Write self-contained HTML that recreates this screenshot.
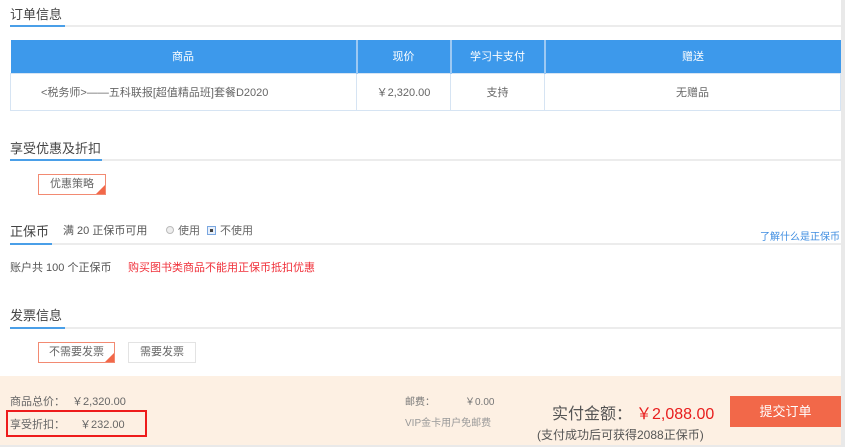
<!DOCTYPE html>
<html><head><meta charset="utf-8"><style>
*{margin:0;padding:0;box-sizing:border-box}
body{width:845px;height:447px;background:#fff;font-family:"Liberation Sans","Noto Sans CJK SC",sans-serif;color:#666;position:relative;overflow:hidden;font-size:11px}
.a{position:absolute;white-space:nowrap}
.h{font-size:13px;color:#444}
.line{position:absolute;height:2px;background:#ececec}
.bl{position:absolute;height:2px;background:#4a9fe8}
table{position:absolute;left:10px;top:40px;width:831px;border-collapse:collapse}
th{background:#3d99eb;color:#fff;font-weight:normal;height:33px;border-right:2px solid #9dc9f3;font-size:11px}
td{height:37px;border:1px solid #d6e4f3;text-align:center;color:#666;font-size:11px}
.btn{position:absolute;border:1px solid #f28a72;background:#fff;text-align:center;font-size:11px;color:#666}
.btn:after{content:"";position:absolute;right:0;bottom:0;border-style:solid;border-width:0 0 9px 9px;border-color:transparent transparent #f26849 transparent}
</style></head><body>
<div style="position:absolute;right:0;top:0;width:4px;height:447px;background:#e9e9e9"></div>
<div class="a h" style="left:10px;top:4px">订单信息</div>
<div class="line" style="left:10px;top:25px;width:831px"></div><div class="bl" style="left:10px;top:25px;width:55px"></div>
<table><tr><th style="width:346px">商品</th><th style="width:94px">现价</th><th style="width:94px">学习卡支付</th><th style="border-right:none">赠送</th></tr>
<tr><td style="text-align:left;padding-left:30px">&lt;税务师&gt;——五科联报[超值精品班]套餐D2020</td><td>￥2,320.00</td><td>支持</td><td>无赠品</td></tr></table>
<div class="a h" style="left:10px;top:138px">享受优惠及折扣</div>
<div class="line" style="left:10px;top:159px;width:831px"></div><div class="bl" style="left:10px;top:159px;width:92px"></div>
<div class="btn" style="left:38px;top:174px;width:68px;height:21px;line-height:19px">优惠策略</div>
<div class="a h" style="left:10px;top:221px">正保币</div>
<div class="a" style="left:63px;top:222px;color:#555">满 20 正保币可用</div>
<div class="a" style="left:166px;top:222px;color:#666"><span style="display:inline-block;width:8px;height:8px;border:1px solid #bbb;border-radius:50%;background:#eee;margin-right:4px"></span>使用</div>
<div class="a" style="left:207px;top:222px;color:#666"><span style="display:inline-block;width:9px;height:9px;border:1px solid #7aa7e0;background:#e8f0fb;margin-right:4px;position:relative;vertical-align:-1px"><span style="position:absolute;left:2px;top:2px;width:3px;height:3px;background:#444"></span></span>不使用</div>
<div class="a" style="left:760px;top:228px;color:#3d8ce0;font-size:10px">了解什么是正保币</div>
<div class="line" style="left:10px;top:243px;width:831px"></div><div class="bl" style="left:10px;top:243px;width:42px"></div>
<div class="a" style="left:10px;top:259px;color:#555">账户共 100 个正保币</div>
<div class="a" style="left:128px;top:259px;color:#f0303a">购买图书类商品不能用正保币抵扣优惠</div>
<div class="a h" style="left:10px;top:305px">发票信息</div>
<div class="line" style="left:10px;top:327px;width:831px"></div><div class="bl" style="left:10px;top:327px;width:55px"></div>
<div class="btn" style="left:38px;top:342px;width:77px;height:21px;line-height:19px">不需要发票</div>
<div style="position:absolute;left:128px;top:342px;width:68px;height:21px;line-height:19px;border:1px solid #e3e3e3;text-align:center;color:#666">需要发票</div>
<div style="position:absolute;left:0;top:376px;width:841px;height:69px;background:#fdf0e3"></div>
<div style="position:absolute;left:0;top:445px;width:845px;height:2px;background:#e9e9e9"></div>
<div class="a" style="left:10px;top:393px;color:#666">商品总价：</div><div class="a" style="left:72px;top:393px;color:#666">￥2,320.00</div>
<div style="position:absolute;left:6px;top:410px;width:141px;height:27px;border:2px solid #ee1b1b"></div>
<div class="a" style="left:10px;top:416px;color:#666">享受折扣：</div><div class="a" style="left:80px;top:416px;color:#666">￥232.00</div>
<div class="a" style="left:405px;top:393px;color:#777;font-size:10px">邮费：</div><div class="a" style="left:465px;top:393px;color:#777;font-size:10px">￥0.00</div>
<div class="a" style="left:405px;top:414px;color:#999;font-size:10px">VIP金卡用户免邮费</div>
<div class="a" style="left:552px;top:400px;color:#555;font-size:16px">实付金额：</div>
<div class="a" style="left:636px;top:400px;color:#e81d1d;font-size:16px">￥2,088.00</div>
<div class="a" style="left:537px;top:426px;color:#555;font-size:12px">(支付成功后可获得2088正保币)</div>
<div style="position:absolute;left:730px;top:396px;width:111px;height:31px;background:#f26849;color:#fff;text-align:center;line-height:31px;font-size:13px">提交订单</div>
</body></html>
